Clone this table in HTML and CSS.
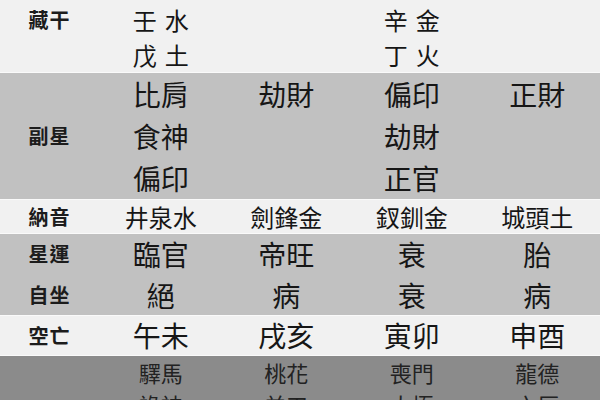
FILE: index.html
```html
<!DOCTYPE html>
<html lang="zh-Hant">
<head>
<meta charset="utf-8">
<title>命盤</title>
<link rel="stylesheet" href="styles.css">
</head>
<body>
<div class="chart">
  <section class="band light b1">
    <div class="label top"><span class="line">藏干</span></div>
    <div class="cell"><span class="line">壬<span class="sp"> </span>水</span><span class="line">戊<span class="sp"> </span>土</span></div>
    <div class="cell"></div>
    <div class="cell"><span class="line">辛<span class="sp"> </span>金</span><span class="line">丁<span class="sp"> </span>火</span></div>
    <div class="cell"></div>
  </section>
  <section class="band grey b2">
    <div class="label"><span class="line">副星</span></div>
    <div class="cell"><span class="line">比肩</span><span class="line">食神</span><span class="line">偏印</span></div>
    <div class="cell"><span class="line">劫財</span></div>
    <div class="cell"><span class="line">偏印</span><span class="line">劫財</span><span class="line">正官</span></div>
    <div class="cell"><span class="line">正財</span></div>
  </section>
  <section class="band light b3">
    <div class="label"><span class="line">納音</span></div>
    <div class="cell"><span class="line">井泉水</span></div>
    <div class="cell"><span class="line">劍鋒金</span></div>
    <div class="cell"><span class="line">釵釧金</span></div>
    <div class="cell"><span class="line">城頭土</span></div>
  </section>
  <section class="band grey b4">
    <div class="label"><span class="line">星運</span><span class="line">自坐</span></div>
    <div class="cell"><span class="line">臨官</span><span class="line">絕</span></div>
    <div class="cell"><span class="line">帝旺</span><span class="line">病</span></div>
    <div class="cell"><span class="line">衰</span><span class="line">衰</span></div>
    <div class="cell"><span class="line">胎</span><span class="line">病</span></div>
  </section>
  <section class="band light b5">
    <div class="label"><span class="line">空亡</span></div>
    <div class="cell"><span class="line">午未</span></div>
    <div class="cell"><span class="line">戌亥</span></div>
    <div class="cell"><span class="line">寅卯</span></div>
    <div class="cell"><span class="line">申酉</span></div>
  </section>
  <section class="band dark b6">
    <div class="label"></div>
    <div class="cell"><span class="line">驛馬</span><span class="line">祿神</span></div>
    <div class="cell"><span class="line">桃花</span><span class="line">羊刃</span></div>
    <div class="cell"><span class="line">喪門</span><span class="line">太極</span></div>
    <div class="cell"><span class="line">龍德</span><span class="line">六厄</span></div>
  </section>
</div>
</body>
</html>
```
FILE: styles.css
```css
html, body {
  margin: 0;
  padding: 0;
  background: #f1f1f1;
}
body {
  width: 600px;
  height: 400px;
  overflow: hidden;
  font-family: "Noto Sans CJK TC", "Noto Sans CJK SC", "Noto Sans", sans-serif;
  color: #161616;
}
.chart {
  display: flex;
  flex-direction: column;
}
.band {
  display: grid;
  grid-template-columns: 98px repeat(4, 125.5px);
  border-top: 1px solid #fafafa;
}
.light { background: #f1f1f1; }
.grey { background: #c1c1c1; }
.dark { background: #8b8b8b; color: #222222; }

.label, .cell {
  display: flex;
  flex-direction: column;
  align-items: center;
}
.label {
  justify-content: center;
  font-size: 20px;
  font-weight: 700;
  letter-spacing: 1px;
  text-indent: 1px;
  color: #1c1c1c;
}
.label.top { justify-content: flex-start; }
.line {
  display: block;
  white-space: pre;
  text-align: center;
}
.sp {
  display: inline-block;
  width: 8px;
}

.b1 { border-top: 0; padding-top: 2px; font-size: 24px; }
.b1 .line { line-height: 35px; }

.b2 { font-size: 28px; }
.b2 .line { line-height: 42px; }

.b3 { font-size: 24px; }
.b3 .line { line-height: 33px; }

.b4 { font-size: 28px; }
.b4 .line { line-height: 40.5px; }

.b5 { font-size: 28px; }
.b5 .line { line-height: 39px; }

.b6 { font-size: 22px; }
.b6 .line { line-height: 32px; }
```
